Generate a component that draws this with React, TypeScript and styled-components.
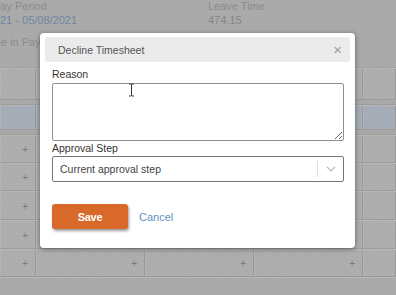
import React from 'react';
import styled, { createGlobalStyle } from 'styled-components';

const GlobalStyle = createGlobalStyle`
    html, body {
        margin: 0;
        padding: 0;
        background: #aaaaaa;
    }
    body {
        font-family: 'Liberation Sans', Arial, sans-serif;
    }
`;

const Page = styled.div`
    position: relative;
    width: 396px;
    height: 295px;
    overflow: hidden;
    background: #aaaaaa;
`;

/* сводка сверху */
const Summary = styled.div`
    height: 68px;
    border-bottom: 1px solid #a0a0a0;
    box-sizing: border-box;
`;

const SummaryRow = styled.div`
    display: grid;
    grid-template-columns: 208px 1fr;
    padding-top: 0;
`;

const Field = styled.div<{ $shift?: number }>`
    display: flex;
    flex-direction: column;
    gap: 1px;
    margin-left: ${(p) => p.$shift ?? 0}px;
`;

const Label = styled.span`
    font-size: 11px;
    line-height: 13px;
    color: #8a8a8a;
`;

const Value = styled.span<{ $link?: boolean; $indent?: number }>`
    font-size: 11px;
    line-height: 13px;
    color: ${(p) => (p.$link ? '#6f86a3' : '#858585')};
    padding-left: ${(p) => p.$indent ?? 0}px;
`;

const SubLabel = styled.div`
    margin-top: 9px;
    margin-left: -17px;
    font-size: 11px;
    line-height: 13px;
    color: #8a8a8a;
`;

/* таблица на фоне */
const Grid = styled.div`
    display: flex;
    flex-direction: column;
`;

const Row = styled.div<{ $h: number; $blue?: boolean }>`
    display: grid;
    grid-template-columns: 36px 109px 109px 109px 1fr;
    height: ${(p) => p.$h}px;
    border-bottom: 1px solid #9c9c9c;
    border-top: 1px solid #b6b6b6;
    box-sizing: border-box;
    background: ${(p) => (p.$blue ? '#a3abb6' : '#acacac')};
`;

const Cell = styled.div`
    position: relative;
    border-right: 1px solid #999999;
    border-left: 1px solid #b4b4b4;
    background-image: repeating-linear-gradient(45deg, rgba(255, 255, 255, 0.05) 0 1px, transparent 1px 3px);
`;

const Plus = styled.span`
    position: absolute;
    right: 7px;
    top: 50%;
    transform: translateY(-50%);
    font-size: 10px;
    color: #7a7a7a;
`;

const Spacer = styled.div`
    height: 4px;
    background: #a8a8a8;
    border-bottom: 1px solid #9c9c9c;
`;

const Footer = styled.div`
    flex: 1;
    height: 20px;
    background: #ababab;
    border-top: 1px solid #b6b6b6;
`;

/* модалка */
const Modal = styled.div`
    position: absolute;
    left: 40px;
    top: 33px;
    width: 315px;
    height: 215px;
    background: #ffffff;
    border-radius: 4px;
    box-shadow: 0 1px 5px rgba(0, 0, 0, 0.45);
    padding: 4px 5px;
    box-sizing: border-box;
    display: flex;
    flex-direction: column;
`;

const ModalHeader = styled.div`
    height: 25px;
    background: #ebebeb;
    border-radius: 3px;
    display: flex;
    align-items: center;
    justify-content: space-between;
    padding: 0 8px 0 13px;
    font-size: 10.5px;
    color: #555555;
`;

const Close = styled.span`
    font-size: 15px;
    color: #9a9a9a;
    line-height: 1;
`;

const Body = styled.div`
    padding: 6px 6px 0 7px;
    display: flex;
    flex-direction: column;
`;

const FormLabel = styled.label`
    font-size: 10.5px;
    line-height: 13px;
    color: #333333;
    margin-bottom: 2px;
`;

const TextArea = styled.textarea`
    display: block;
    height: 58px;
    border: 1px solid #8f8f8f;
    border-radius: 2px;
    resize: vertical;
    margin: 0 0 1px 0;
    box-sizing: border-box;
    font-family: inherit;
`;

const Select = styled.div`
    height: 26px;
    border: 1px solid #777777;
    border-radius: 2px;
    display: flex;
    align-items: center;
    box-sizing: border-box;
    margin-top: -1px;
`;

const SelectText = styled.span`
    flex: 1;
    padding-left: 7px;
    font-size: 10.5px;
    color: #444444;
`;

const Divider = styled.span`
    width: 1px;
    height: 16px;
    background: #dddddd;
`;

const Chevron = styled.span`
    width: 25px;
    display: flex;
    justify-content: center;
`;

const Actions = styled.div`
    display: flex;
    align-items: center;
    gap: 11px;
    margin-top: 22px;
`;

const SaveButton = styled.button`
    width: 76px;
    height: 25px;
    border: none;
    border-radius: 3px;
    background: #d9692a;
    color: #ffffff;
    font-family: inherit;
    font-size: 11px;
    font-weight: bold;
    letter-spacing: -0.3px;
    box-shadow: 1px 2px 3px rgba(0, 0, 0, 0.4);
`;

const CancelLink = styled.span`
    font-size: 11px;
    color: #5f8fbf;
`;

const Cursor = styled.svg`
    position: absolute;
    left: 88px;
    top: 50px;
`;

const bodyRows = [28, 28, 29, 29, 28];

export default function App() {
    return (
        <>
            <GlobalStyle />
            <Page>
                <Summary>
                    <SummaryRow>
                        <Field $shift={-7}>
                            <Label>Pay Period</Label>
                            <Value $link $indent={7}>21 - 05/08/2021</Value>
                        </Field>
                        <Field>
                            <Label>Leave Time</Label>
                            <Value>474.15</Value>
                        </Field>
                    </SummaryRow>
                    <SubLabel>Time in Pay:</SubLabel>
                </Summary>
                <Grid>
                    <Row $h={32}>
                        <Cell /><Cell /><Cell /><Cell /><Cell />
                    </Row>
                    <Spacer />
                    <Row $h={25} $blue>
                        <Cell /><Cell /><Cell /><Cell /><Cell />
                    </Row>
                    <Spacer />
                    {bodyRows.map((h, i) => (
                        <Row key={i} $h={h}>
                            <Cell><Plus>+</Plus></Cell>
                            <Cell><Plus>+</Plus></Cell>
                            <Cell><Plus>+</Plus></Cell>
                            <Cell><Plus>+</Plus></Cell>
                            <Cell />
                        </Row>
                    ))}
                    <Footer />
                </Grid>
                <Modal>
                    <ModalHeader>
                        <span>Decline Timesheet</span>
                        <Close>×</Close>
                    </ModalHeader>
                    <Body>
                        <FormLabel>Reason</FormLabel>
                        <TextArea />
                        <FormLabel>Approval Step</FormLabel>
                        <Select>
                            <SelectText>Current approval step</SelectText>
                            <Divider />
                            <Chevron>
                                <svg width="10" height="6" viewBox="0 0 10 6">
                                    <path d="M1 1l4 4 4-4" fill="none" stroke="#bbbbbb" strokeWidth="1.2" />
                                </svg>
                            </Chevron>
                        </Select>
                        <Actions>
                            <SaveButton>Save</SaveButton>
                            <CancelLink>Cancel</CancelLink>
                        </Actions>
                    </Body>
                    <Cursor width="7" height="14" viewBox="0 0 7 14">
                        <path d="M1 1h2l0.5 0.5 0.5-0.5h2M3.5 1.5v11M1 13h2l0.5-0.5 0.5 0.5h2" fill="none" stroke="#333" strokeWidth="1" />
                    </Cursor>
                </Modal>
            </Page>
        </>
    );
}
